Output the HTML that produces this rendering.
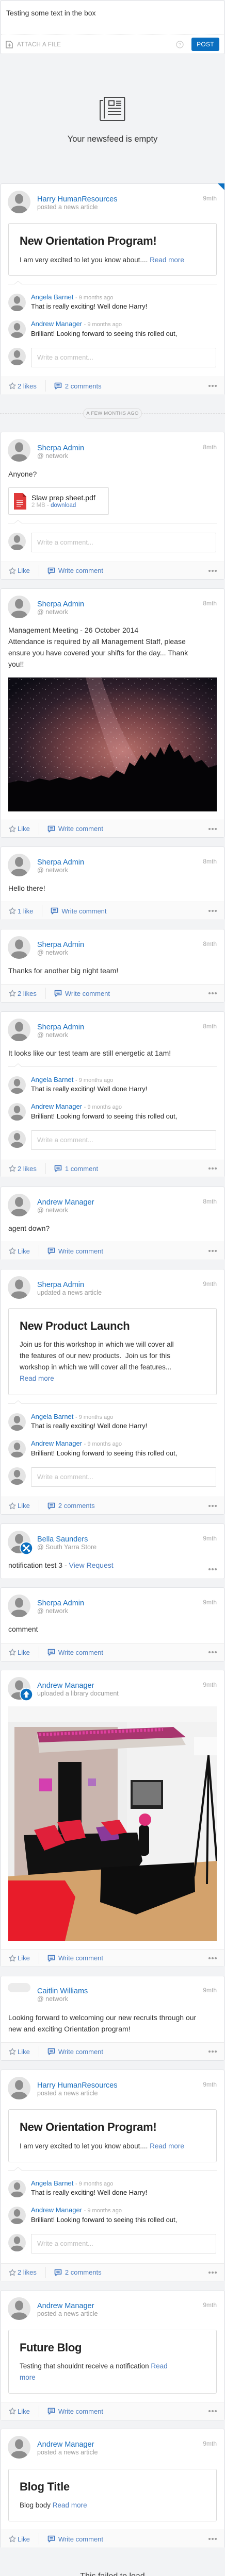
<!DOCTYPE html>
<html><head><meta charset="utf-8">
<style>
*{margin:0;padding:0;box-sizing:border-box}
html{width:436px;height:5081px;overflow:hidden;background:#f2f3f5}
body{width:436px;height:5081px;background:#f2f3f5;position:relative;font-family:"Liberation Sans",Arial,sans-serif;color:#333;overflow:hidden}
.a{position:absolute;white-space:nowrap}
.card{position:absolute;left:1px;width:434px;background:#fff;border:1px solid #e1e3e6;border-radius:3px}
.av{position:absolute;left:13px;top:13px;width:44px;height:44px}
.nm{position:absolute;left:70px;top:21px;font-size:14.5px;line-height:18px;color:#1a6fbf;white-space:nowrap}
.sb{position:absolute;left:70px;top:37px;font-size:12.5px;line-height:16px;color:#9a9a9a;white-space:nowrap}
.tm{position:absolute;right:14px;top:20px;font-size:12px;line-height:16px;color:#aaa}
.tx{position:absolute;left:14px;font-size:14px;line-height:22px;color:#333;white-space:nowrap}
.ft{position:absolute;left:0;right:0;bottom:0;background:#fafafa;border-top:1px solid #ececec;display:flex;align-items:center;padding-left:15px;font-size:13px;color:#4a7cc0}
.ft .lb{margin-left:3px}
.ft .dv{display:inline-block;width:1px;height:22px;background:#e6e6e6;margin:0 16px 0 17px}
.ft .cm{margin-right:6px}
.dots{position:absolute;right:14px;top:50%;margin-top:-2px;display:flex;gap:2px}
.dots i{display:block;width:4px;height:4px;border-radius:2px;background:#9a9a9a}
.art{position:absolute;left:14px;width:404px;border:1px solid #dcdcdc;border-radius:3px;background:#fff}
.art .t{position:absolute;left:21px;top:20px;font-size:22px;line-height:28px;font-weight:bold;color:#222;white-space:nowrap;letter-spacing:-0.3px}
.art .b{position:absolute;left:21px;top:59px;font-size:13.5px;line-height:22px;color:#333;white-space:nowrap}
.rm{color:#4a7cc0}
.cb{position:absolute;left:14px;width:404px;height:170px}
.cav{position:absolute;left:0;width:34px;height:34px}
.cn{position:absolute;left:44px;font-size:13px;line-height:16px;color:#1a6fbf;white-space:nowrap}
.cn span{font-size:11px;color:#aaa}
.ct{position:absolute;left:44px;font-size:13px;line-height:18px;color:#222;white-space:nowrap}
.in{position:absolute;left:44px;width:359px;height:38px;border:1px solid #dcdcdc;border-radius:2px;background:#fff;font-size:13px;color:#c2c2c2;line-height:36px;padding-left:11px}
</style></head><body>
<svg width="0" height="0" style="position:absolute;left:0;top:0">
<defs>
<symbol id="av" viewBox="0 0 44 44"><clipPath id="cc"><circle cx="22" cy="22" r="22"/></clipPath><g clip-path="url(#cc)"><rect width="44" height="44" fill="#e4e4e4"/><ellipse cx="22" cy="16" rx="8" ry="9.5" fill="#8d8d8d"/><path d="M5 44 C6 33 12 29.5 22 29.5 C32 29.5 38 33 39 44Z" fill="#8d8d8d"/></g></symbol>
<symbol id="st" viewBox="0 0 14 14"><polygon points="7,1 8.8,5 13,5.3 9.8,8.2 10.8,12.6 7,10.3 3.2,12.6 4.2,8.2 1,5.3 5.2,5" fill="none" stroke="#8f9aaa" stroke-width="1.3" stroke-linejoin="round"/></symbol>
<symbol id="cm" viewBox="0 0 15 14"><path d="M1.5 1.5h12v8.5h-7.5l-3 2.8v-2.8h-1.5z" fill="none" stroke="#3f75c0" stroke-width="1.6" stroke-linejoin="round"/><path d="M4.3 4.6h6.4M4.3 7.1h6.4" stroke="#3f75c0" stroke-width="1.4"/></symbol>
<symbol id="nt" viewBox="0 0 404 8"><path d="M0 7.5H12L19 1.5L26 7.5H404" fill="none" stroke="#e6e6e6" stroke-width="1"/></symbol>
<pattern id="stars" width="23" height="19" patternUnits="userSpaceOnUse"><circle cx="3" cy="4" r=".7" fill="#fff" opacity=".8"/><circle cx="15" cy="11" r=".6" fill="#fff" opacity=".7"/><circle cx="9" cy="16" r=".5" fill="#fff" opacity=".6"/><circle cx="20" cy="2" r=".5" fill="#fff" opacity=".6"/></pattern>
<radialGradient id="sky" cx="0.55" cy="0.55" r="0.7"><stop offset="0" stop-color="#b8706a"/><stop offset="0.35" stop-color="#7a4448"/><stop offset="0.7" stop-color="#2e1e2a"/><stop offset="1" stop-color="#0d0c14"/></radialGradient>
</defs></svg>

<!-- composer -->
<div class="card" style="top:1px;height:104px;border-radius:2px">
  <div class="a" style="left:10px;top:13px;font-size:14px;line-height:20px;color:#333">Testing some text in the box</div>
  <div class="a" style="left:0;right:0;top:65px;border-top:1px dotted #dedede"></div>
  <svg class="a" style="left:9px;top:77px" width="14" height="15" viewBox="0 0 14 15"><path d="M1 1h8l4 4v9H1z" fill="none" stroke="#9a9a9a" stroke-width="1.5"/><path d="M7 5.5v6M4 8.5h6" stroke="#9a9a9a" stroke-width="1.6"/></svg>
  <div class="a" style="left:31px;top:77px;font-size:11.5px;line-height:16px;color:#aaa;letter-spacing:0.3px">ATTACH A FILE</div>
  <svg class="a" style="left:339px;top:77px" width="15" height="15" viewBox="0 0 15 15"><circle cx="7.5" cy="7.5" r="6.5" fill="none" stroke="#ccc" stroke-width="1.3"/><text x="7.5" y="11" text-anchor="middle" font-size="9.5" fill="#ccc" font-family="Liberation Sans">?</text></svg>
  <div class="a" style="left:369px;top:71px;width:54px;height:26px;background:#0b6fc0;border-radius:3px;color:#fff;font-size:12px;line-height:26px;text-align:center;letter-spacing:.3px">POST</div>
</div>

<!-- empty state -->
<svg class="a" style="left:193px;top:187px" width="50" height="49" viewBox="0 0 50 49"><path d="M9 2h38a1.5 1.5 0 0 1 1.5 1.5v42a1.5 1.5 0 0 1-1.5 1.5H3a2 2 0 0 1-2-2V8h6" fill="none" stroke="#333" stroke-width="1.8"/><path d="M9 2v41" stroke="#333" stroke-width="1.8"/><rect x="18" y="8.5" width="10" height="9" fill="none" stroke="#333" stroke-width="1.8"/><path d="M32 9.5h10M32 13.5h10M32 17.5h10M16 23h26M16 29h26M16 35h26" stroke="#333" stroke-width="1.8"/></svg>
<div class="a" style="left:0;width:436px;top:260px;text-align:center;font-size:16.5px;line-height:20px;color:#333">Your newsfeed is empty</div>

<!-- c1 -->
<div class="card" style="top:356px;height:411px">
  <svg class="a" style="right:-1px;top:-1px" width="13" height="13"><polygon points="0,0 13,0 13,13" fill="#0b6fc0"/></svg>
  <svg class="av"><use href="#av"/></svg>
  <div class="nm">Harry HumanResources</div><div class="sb">posted a news article</div><div class="tm">9mth</div>
  <div class="art" style="top:76px;height:102px"><div class="t">New Orientation Program!</div><div class="b" style="top:60px">I am very excited to let you know about.... <span class="rm">Read more</span></div></div>
  <div class="cb" style="top:187px">
    <svg class="a" style="left:0;top:0" width="404" height="8"><use href="#nt"/></svg>
    <svg class="cav" style="top:26px"><use href="#av"/></svg>
    <div class="cn" style="top:25px">Angela Barnet <span>- 9 months ago</span></div>
    <div class="ct" style="top:42px">That is really exciting! Well done Harry!</div>
    <svg class="cav" style="top:78px"><use href="#av"/></svg>
    <div class="cn" style="top:77px">Andrew Manager <span>- 9 months ago</span></div>
    <div class="ct" style="top:95px">Brilliant! Looking forward to seeing this rolled out,</div>
    <svg class="cav" style="top:131px"><use href="#av"/></svg>
    <div class="in" style="top:131px">Write a comment...</div>
  </div>
  <div class="ft" style="top:374px"><svg width="14" height="14"><use href="#st"/></svg><span class="lb">2 likes</span><i class="dv"></i><svg class="cm" width="15" height="14"><use href="#cm"/></svg><span>2 comments</span><div class="dots"><i></i><i></i><i></i></div></div>
</div>

<!-- divider -->
<div class="a" style="left:0;width:436px;top:802px;border-top:1px dashed #dcdcdc"></div>
<div class="a" style="left:161px;top:792px;width:114px;height:21px;border:1px solid #dedede;border-radius:11px;background:#f2f3f5;font-size:9.5px;line-height:19px;text-align:center;color:#999;letter-spacing:.3px">A FEW MONTHS AGO</div>

<!-- c2 -->
<div class="card" style="top:838px;height:287px">
  <svg class="av"><use href="#av"/></svg>
  <div class="nm" style="top:22px">Sherpa Admin</div><div class="sb" style="top:38px">@ network</div><div class="tm" style="top:21px">8mth</div>
  <div class="tx" style="top:70px">Anyone?</div>
  <div class="a" style="left:14px;top:107px;width:195px;height:53px;border:1px solid #dcdcdc;border-radius:2px">
    <svg class="a" style="left:10px;top:10px" width="24" height="32" viewBox="0 0 24 32"><path d="M0 0h17l7 7v25H0z" fill="#e03a3a"/><path d="M17 0v7h7z" fill="#a51f1f"/><path d="M5 15h13M5 18.5h13M5 22h13M5 25.5h9" stroke="#fff" stroke-width="1.2"/></svg>
    <div class="a" style="left:44px;top:10px;font-size:14px;line-height:18px;color:#222">Slaw prep sheet.pdf</div>
    <div class="a" style="left:44px;top:27px;font-size:11.5px;line-height:14px;color:#bbb">2 MB - <span style="color:#3f75c0">download</span></div>
  </div>
  <div class="cb" style="top:169px">
    <svg class="a" style="left:0;top:0" width="404" height="8"><use href="#nt"/></svg>
    <svg class="cav" style="top:26px"><use href="#av"/></svg>
    <div class="in" style="top:26px">Write a comment...</div>
  </div>
  <div class="ft" style="top:251px"><svg width="14" height="14"><use href="#st"/></svg><span class="lb">Like</span><i class="dv"></i><svg class="cm" width="15" height="14"><use href="#cm"/></svg><span>Write comment</span><div class="dots"><i></i><i></i><i></i></div></div>
</div>

<!-- c3 -->
<div class="card" style="top:1142px;height:484px">
  <svg class="av"><use href="#av"/></svg>
  <div class="nm">Sherpa Admin</div><div class="sb">@ network</div><div class="tm">8mth</div>
  <div class="tx" style="top:69px">Management Meeting - 26 October 2014<br>Attendance is required by all Management Staff, please<br>ensure you have covered your shifts for the day... Thank<br>you!!</div>
  <svg class="a" style="left:14px;top:172px" width="404" height="260" viewBox="0 0 404 260">
    <rect width="404" height="260" fill="url(#sky)"/>
    <path d="M180 0 C200 60 220 110 250 160 L300 200 L220 220 C200 150 170 80 150 0Z" fill="#d9a0a8" opacity=".25"/>
    <rect width="404" height="260" fill="url(#stars)"/>
    <path d="M0 205 L20 200 L40 203 L60 196 L80 200 L100 194 L120 199 L140 192 L160 198 L180 190 L195 195 L210 180 L225 188 L235 165 L245 172 L258 150 L265 160 L275 145 L285 155 L295 135 L302 150 L312 128 L322 145 L330 140 L340 158 L352 150 L362 165 L375 160 L388 175 L404 170 V260 H0Z" fill="#050406"/>
  </svg>
  <div class="ft" style="top:448px"><svg width="14" height="14"><use href="#st"/></svg><span class="lb">Like</span><i class="dv"></i><svg class="cm" width="15" height="14"><use href="#cm"/></svg><span>Write comment</span><div class="dots"><i></i><i></i><i></i></div></div>
</div>

<!-- c4 -->
<div class="card" style="top:1643px;height:143px">
  <svg class="av"><use href="#av"/></svg>
  <div class="nm">Sherpa Admin</div><div class="sb">@ network</div><div class="tm">8mth</div>
  <div class="tx" style="top:69px">Hello there!</div>
  <div class="ft" style="top:106px"><svg width="14" height="14"><use href="#st"/></svg><span class="lb">1 like</span><i class="dv"></i><svg class="cm" width="15" height="14"><use href="#cm"/></svg><span>Write comment</span><div class="dots"><i></i><i></i><i></i></div></div>
</div>

<!-- c5 -->
<div class="card" style="top:1803px;height:143px">
  <svg class="av"><use href="#av"/></svg>
  <div class="nm">Sherpa Admin</div><div class="sb">@ network</div><div class="tm">8mth</div>
  <div class="tx" style="top:69px">Thanks for another big night team!</div>
  <div class="ft" style="top:106px"><svg width="14" height="14"><use href="#st"/></svg><span class="lb">2 likes</span><i class="dv"></i><svg class="cm" width="15" height="14"><use href="#cm"/></svg><span>Write comment</span><div class="dots"><i></i><i></i><i></i></div></div>
</div>

<!-- c6 -->
<div class="card" style="top:1963px;height:322px">
  <svg class="av"><use href="#av"/></svg>
  <div class="nm">Sherpa Admin</div><div class="sb">@ network</div><div class="tm">8mth</div>
  <div class="tx" style="top:69px">It looks like our test team are still energetic at 1am!</div>
  <div class="cb" style="top:99px">
    <svg class="a" style="left:0;top:0" width="404" height="8"><use href="#nt"/></svg>
    <svg class="cav" style="top:26px"><use href="#av"/></svg>
    <div class="cn" style="top:25px">Angela Barnet <span>- 9 months ago</span></div>
    <div class="ct" style="top:42px">That is really exciting! Well done Harry!</div>
    <svg class="cav" style="top:78px"><use href="#av"/></svg>
    <div class="cn" style="top:77px">Andrew Manager <span>- 9 months ago</span></div>
    <div class="ct" style="top:95px">Brilliant! Looking forward to seeing this rolled out,</div>
    <svg class="cav" style="top:131px"><use href="#av"/></svg>
    <div class="in" style="top:131px">Write a comment...</div>
  </div>
  <div class="ft" style="top:287px"><svg width="14" height="14"><use href="#st"/></svg><span class="lb">2 likes</span><i class="dv"></i><svg class="cm" width="15" height="14"><use href="#cm"/></svg><span>1 comment</span><div class="dots"><i></i><i></i><i></i></div></div>
</div>

<!-- c7 -->
<div class="card" style="top:2303px;height:143px">
  <svg class="av"><use href="#av"/></svg>
  <div class="nm">Andrew Manager</div><div class="sb">@ network</div><div class="tm">8mth</div>
  <div class="tx" style="top:69px">agent down?</div>
  <div class="ft" style="top:106px"><svg width="14" height="14"><use href="#st"/></svg><span class="lb">Like</span><i class="dv"></i><svg class="cm" width="15" height="14"><use href="#cm"/></svg><span>Write comment</span><div class="dots"><i></i><i></i><i></i></div></div>
</div>

<!-- c8 -->
<div class="card" style="top:2463px;height:477px">
  <svg class="av"><use href="#av"/></svg>
  <div class="nm">Sherpa Admin</div><div class="sb">updated a news article</div><div class="tm">9mth</div>
  <div class="art" style="top:75px;height:169px"><div class="t">New Product Launch</div><div class="b">Join us for this workshop in which we will cover all<br>the features of our new products.&nbsp; Join us for this<br>workshop in which we will cover all the features...<br><span class="rm">Read more</span></div></div>
  <div class="cb" style="top:253px">
    <svg class="a" style="left:0;top:0" width="404" height="8"><use href="#nt"/></svg>
    <svg class="cav" style="top:26px"><use href="#av"/></svg>
    <div class="cn" style="top:25px">Angela Barnet <span>- 9 months ago</span></div>
    <div class="ct" style="top:42px">That is really exciting! Well done Harry!</div>
    <svg class="cav" style="top:78px"><use href="#av"/></svg>
    <div class="cn" style="top:77px">Andrew Manager <span>- 9 months ago</span></div>
    <div class="ct" style="top:95px">Brilliant! Looking forward to seeing this rolled out,</div>
    <svg class="cav" style="top:131px"><use href="#av"/></svg>
    <div class="in" style="top:131px">Write a comment...</div>
  </div>
  <div class="ft" style="top:441px"><svg width="14" height="14"><use href="#st"/></svg><span class="lb">Like</span><i class="dv"></i><svg class="cm" width="15" height="14"><use href="#cm"/></svg><span>2 comments</span><div class="dots"><i></i><i></i><i></i></div></div>
</div>

<!-- c9 -->
<div class="card" style="top:2957px;height:108px">
  <svg class="av"><use href="#av"/></svg>
  <svg class="a" style="left:36px;top:34px" width="26" height="26" viewBox="0 0 26 26"><circle cx="13" cy="13" r="12" fill="#0b6fc0" stroke="#fff" stroke-width="1.5"/><path d="M8 8l10 10M18 8l-10 10" stroke="#fff" stroke-width="2.6" stroke-linecap="round"/><circle cx="8" cy="8" r="2.3" fill="#fff"/><circle cx="18" cy="18" r="2.3" fill="#fff"/></svg>
  <div class="nm">Bella Saunders</div><div class="sb">@ South Yarra Store</div><div class="tm">9mth</div>
  <div class="tx" style="top:69px">notification test 3 - <span class="rm">View Request</span></div>
  <div class="dots" style="top:88px"><i></i><i></i><i></i></div>
</div>

<!-- c10 -->
<div class="card" style="top:3081px;height:144px">
  <svg class="av"><use href="#av"/></svg>
  <div class="nm">Sherpa Admin</div><div class="sb">@ network</div><div class="tm">9mth</div>
  <div class="tx" style="top:69px">comment</div>
  <div class="ft" style="top:107px"><svg width="14" height="14"><use href="#st"/></svg><span class="lb">Like</span><i class="dv"></i><svg class="cm" width="15" height="14"><use href="#cm"/></svg><span>Write comment</span><div class="dots"><i></i><i></i><i></i></div></div>
</div>

<!-- c11 -->
<div class="card" style="top:3241px;height:577px">
  <svg class="av"><use href="#av"/></svg>
  <svg class="a" style="left:36px;top:34px" width="26" height="26" viewBox="0 0 26 26"><circle cx="13" cy="13" r="12" fill="#0b6fc0" stroke="#fff" stroke-width="1.5"/><path d="M13 6l6 7h-3.5v6h-5v-6H7z" fill="#fff"/></svg>
  <div class="nm">Andrew Manager</div><div class="sb">uploaded a library document</div><div class="tm">9mth</div>
  <svg class="a" style="left:14px;top:70px" width="404" height="455" viewBox="0 0 404 455">
    <rect width="404" height="455" fill="#eeeeee"/>
    <rect x="0" y="0" width="404" height="30" fill="#f6f6f6"/>
    <rect x="230" y="30" width="174" height="300" fill="#f2f2f2"/>
    <rect x="12" y="40" width="200" height="300" fill="#c9b5ae"/>
    <path d="M56 55 L330 50 L344 75 L60 90Z" fill="#d9d2cc"/>
    <path d="M56 50 L320 40 L344 60 L60 70Z" fill="#a8356e"/>
    <path d="M60 55 L300 45" stroke="#e040a0" stroke-width="6" stroke-dasharray="4 3"/>
    <rect x="97" y="108" width="45" height="140" fill="#111"/>
    <rect x="60" y="140" width="25" height="25" fill="#d43fb0"/>
    <rect x="155" y="140" width="15" height="15" fill="#b070c0"/>
    <rect x="237" y="143" width="63" height="56" fill="#222"/><rect x="241" y="147" width="55" height="45" fill="#777"/>
    <path d="M30 250 L250 245 L260 300 L240 330 L40 338 Z" fill="#111"/>
    <path d="M50 240 L90 230 L110 265 L70 280Z" fill="#e0203a"/>
    <path d="M95 225 L140 220 L150 255 L110 262Z" fill="#e0203a"/>
    <path d="M170 235 L210 230 L215 258 L180 262Z" fill="#8a3a9a"/>
    <path d="M180 225 L215 220 L230 245 L200 250Z" fill="#e0203a"/>
    <rect x="253" y="230" width="20" height="60" fill="#111" rx="8"/>
    <circle cx="265" cy="220" r="12" fill="#e0307a"/>
    <path d="M0 330 L404 300 V455 H0Z" fill="#d3a26c"/>
    <path d="M0 338 L110 338 L130 370 L110 455 L0 455Z" fill="#e81c2a"/>
    <path d="M180 313 L360 303 L362 360 L248 404 L178 380Z" fill="#0d0d0d"/>
    <rect x="360" y="60" width="44" height="35" fill="#fafafa"/>
    <path d="M388 95 L360 330 M388 95 L385 345 M388 95 L404 300" stroke="#111" stroke-width="4"/>
  </svg>
  <div class="ft" style="top:541px"><svg width="14" height="14"><use href="#st"/></svg><span class="lb">Like</span><i class="dv"></i><svg class="cm" width="15" height="14"><use href="#cm"/></svg><span>Write comment</span><div class="dots"><i></i><i></i><i></i></div></div>
</div>

<!-- c12 -->
<div class="card" style="top:3835px;height:165px">
  <div class="a" style="left:13px;top:13px;width:44px;height:18px;border-radius:9px;background:#ececec"></div>
  <div class="nm" style="top:20px">Caitlin Williams</div><div class="sb" style="top:36px">@ network</div><div class="tm" style="top:19px">9mth</div>
  <div class="tx" style="top:69px">Looking forward to welcoming our new recruits through our<br>new and exciting Orientation program!</div>
  <div class="ft" style="top:128px"><svg width="14" height="14"><use href="#st"/></svg><span class="lb">Like</span><i class="dv"></i><svg class="cm" width="15" height="14"><use href="#cm"/></svg><span>Write comment</span><div class="dots"><i></i><i></i><i></i></div></div>
</div>

<!-- c13 -->
<div class="card" style="top:4017px;height:411px">
  <svg class="av"><use href="#av"/></svg>
  <div class="nm">Harry HumanResources</div><div class="sb">posted a news article</div><div class="tm">9mth</div>
  <div class="art" style="top:76px;height:103px"><div class="t">New Orientation Program!</div><div class="b" style="top:60px">I am very excited to let you know about.... <span class="rm">Read more</span></div></div>
  <div class="cb" style="top:187px">
    <svg class="a" style="left:0;top:0" width="404" height="8"><use href="#nt"/></svg>
    <svg class="cav" style="top:26px"><use href="#av"/></svg>
    <div class="cn" style="top:25px">Angela Barnet <span>- 9 months ago</span></div>
    <div class="ct" style="top:42px">That is really exciting! Well done Harry!</div>
    <svg class="cav" style="top:78px"><use href="#av"/></svg>
    <div class="cn" style="top:77px">Andrew Manager <span>- 9 months ago</span></div>
    <div class="ct" style="top:95px">Brilliant! Looking forward to seeing this rolled out,</div>
    <svg class="cav" style="top:131px"><use href="#av"/></svg>
    <div class="in" style="top:131px">Write a comment...</div>
  </div>
  <div class="ft" style="top:375px"><svg width="14" height="14"><use href="#st"/></svg><span class="lb">2 likes</span><i class="dv"></i><svg class="cm" width="15" height="14"><use href="#cm"/></svg><span>2 comments</span><div class="dots"><i></i><i></i><i></i></div></div>
</div>

<!-- c14 -->
<div class="card" style="top:4445px;height:253px">
  <svg class="av"><use href="#av"/></svg>
  <div class="nm">Andrew Manager</div><div class="sb">posted a news article</div><div class="tm">9mth</div>
  <div class="art" style="top:76px;height:124px"><div class="t">Future Blog</div><div class="b">Testing that shouldnt receive a notification <span class="rm">Read</span><br><span class="rm">more</span></div></div>
  <div class="ft" style="top:216px"><svg width="14" height="14"><use href="#st"/></svg><span class="lb">Like</span><i class="dv"></i><svg class="cm" width="15" height="14"><use href="#cm"/></svg><span>Write comment</span><div class="dots"><i></i><i></i><i></i></div></div>
</div>

<!-- c15 -->
<div class="card" style="top:4714px;height:232px">
  <svg class="av"><use href="#av"/></svg>
  <div class="nm">Andrew Manager</div><div class="sb">posted a news article</div><div class="tm">9mth</div>
  <div class="art" style="top:77px;height:102px"><div class="t">Blog Title</div><div class="b">Blog body <span class="rm">Read more</span></div></div>
  <div class="ft" style="top:195px"><svg width="14" height="14"><use href="#st"/></svg><span class="lb">Like</span><i class="dv"></i><svg class="cm" width="15" height="14"><use href="#cm"/></svg><span>Write comment</span><div class="dots"><i></i><i></i><i></i></div></div>
</div>

<!-- failed -->
<div class="a" style="left:0;width:436px;top:4991px;text-align:center;font-size:16px;line-height:20px;color:#333">This failed to load</div>
<div class="a" style="left:188px;top:5016px;font-size:16px;line-height:20px;color:#1a6fbf">
  <svg style="vertical-align:-2px" width="16" height="16" viewBox="0 0 16 16"><path d="M13 5.5A6 6 0 1 0 14 9.5" fill="none" stroke="#1a6fbf" stroke-width="2.4"/><path d="M14.8 1.5v5.5H9.3z" fill="#1a6fbf"/></svg> Retry
</div>
</body></html>
